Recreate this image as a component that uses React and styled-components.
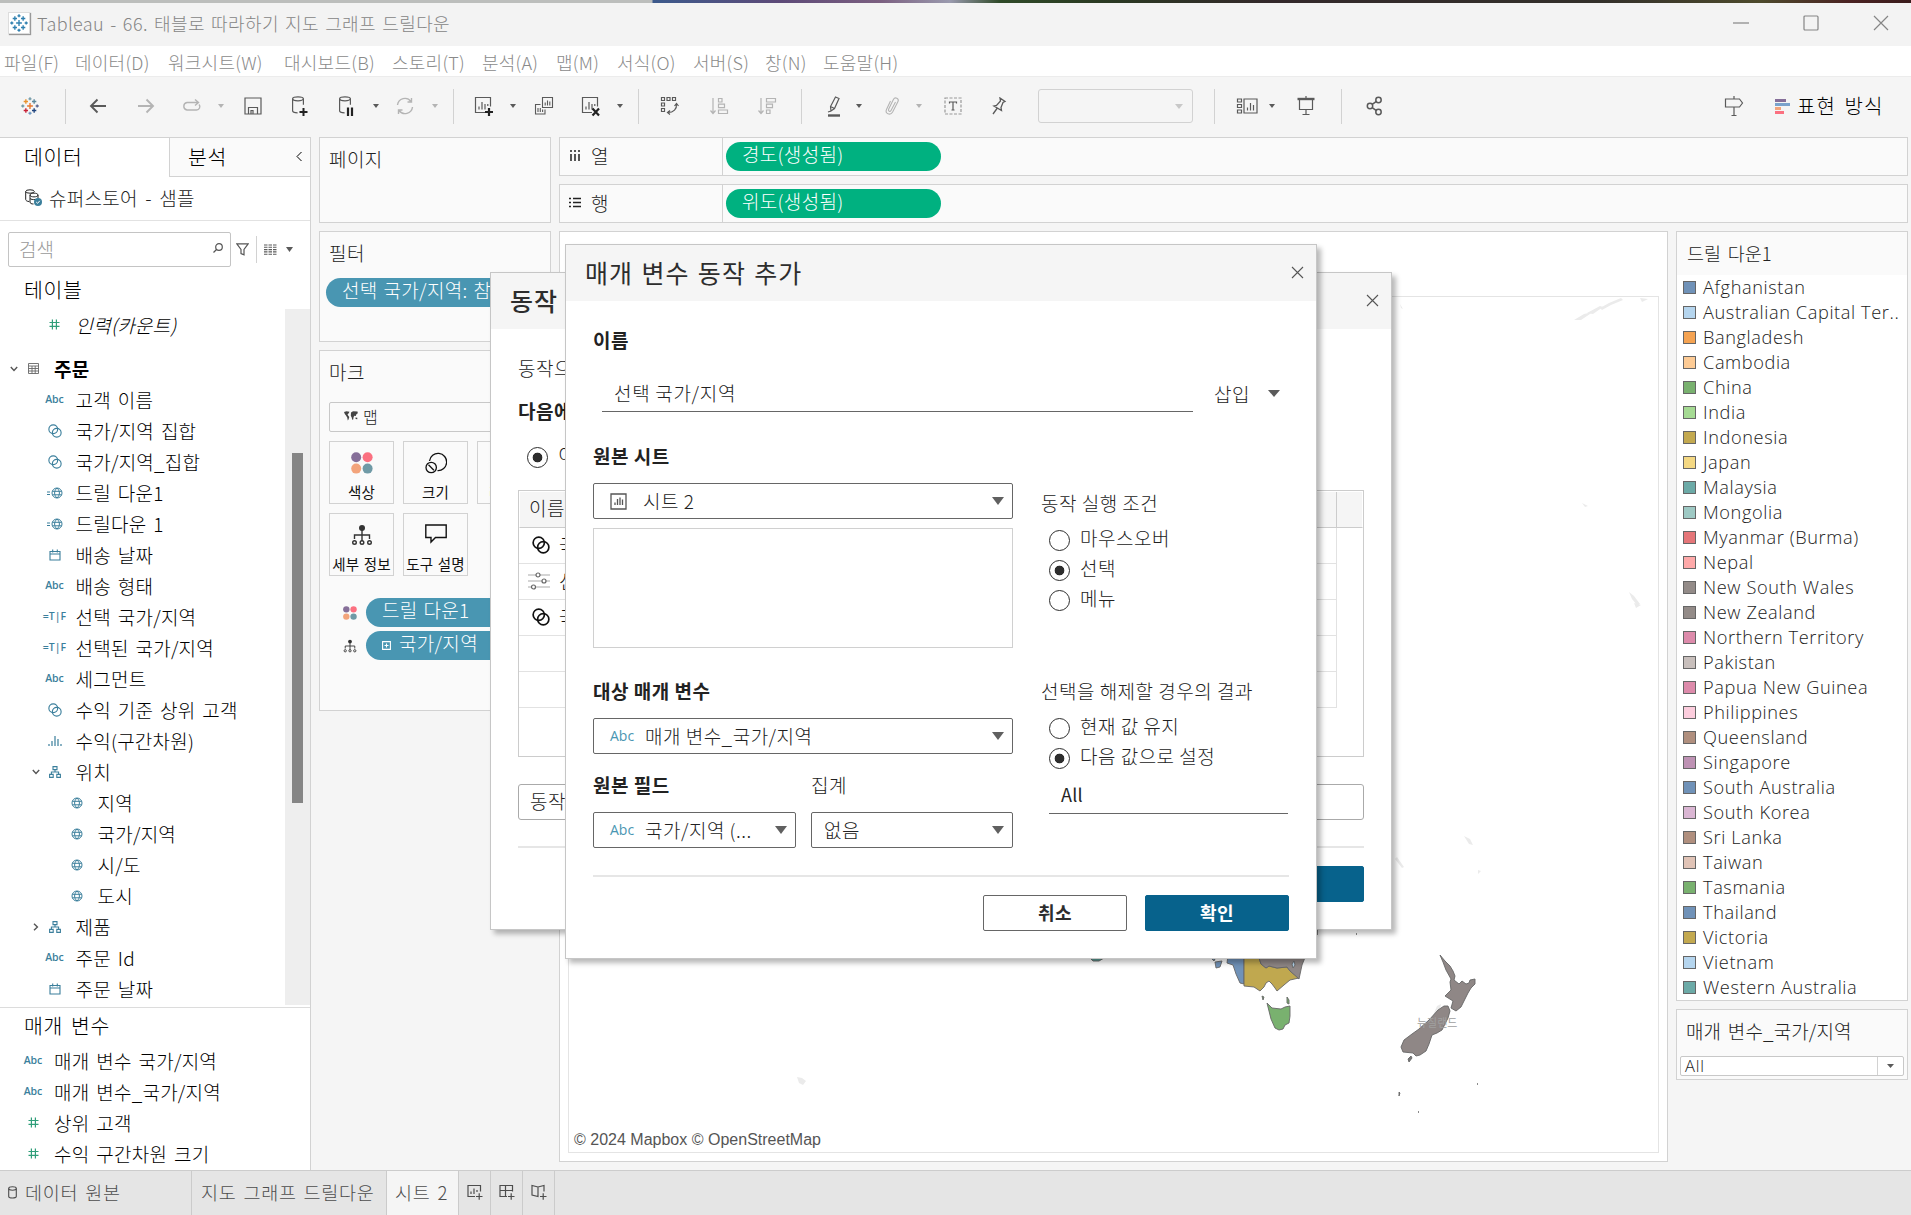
import React from "react";
import styled, { createGlobalStyle } from "styled-components";

const Global = createGlobalStyle`
  *, *::before, *::after { box-sizing: border-box; }
  html, body { margin: 0; padding: 0; overflow: hidden; }
  body {
    font-family: "Noto Sans CJK KR", "Noto Sans", sans-serif;
    font-size: 19px;
    font-weight: 300;
    color: #111;
  }
  svg { display: block; flex: none; }
`;

const BLUE = "#3b7f9c";
const GREEN = "#2f9e79";
const LINE = "#d2d2d2";

/* ---------- shell ---------- */
const Window = styled.div`
  position: relative;
  width: 1911px;
  height: 1215px;
  display: flex;
  flex-direction: column;
  background: #f5f5f5;
  overflow: hidden;
  white-space: nowrap;
`;
const Desktop = styled.div`
  height: 3px;
  flex: none;
  background: linear-gradient(90deg, #bcbebc 0 652px, #3c5a8c 653px, #5d4a78 780px, #7b5f80 880px, #9a9aae 950px, #2f4a28 1000px, #2a3a22 1100px, #33282a 1270px, #33302a 1600px, #4d4a2c 1760px, #4a2222 1850px, #3a1c1c);
`;
const TitleBar = styled.header`
  height: 43px;
  flex: none;
  display: flex;
  align-items: center;
  padding: 0 22px 3px 8px;
  background: #f3f3f3;
  color: #858585;
  font-size: 18px;
`;
const AppBadge = styled.span`
  width: 22px;
  height: 22px;
  display: grid;
  place-items: center;
  background: #fff;
  box-shadow: 1px 1px 1px #999;
  border: 1px solid #ddd;
  margin-right: 7px;
`;
const Title = styled.span`
  flex: 1;
  letter-spacing: 0.4px;
  word-spacing: 1.8px;
`;
const WindowButtons = styled.div`
  display: flex;
  gap: 54px;
`;
const MenuBar = styled.nav`
  height: 30px;
  flex: none;
  display: flex;
  align-items: center;
  gap: 17px;
  padding: 2px 0 0 4px;
  background: #fff;
  color: #8a8a8a;
  font-size: 18px;
  letter-spacing: 0.25px;
`;
const MenuItem = styled.span`
  width: ${(p) => p.$w}px;
  line-height: 28px;
`;
const Toolbar = styled.div`
  height: 61px;
  flex: none;
  display: flex;
  align-items: center;
  border-top: 1px solid #ececec;
  padding: 0 28px 2px 0;
`;
const Tool = styled.span`
  width: ${(p) => p.$w || 22}px;
  margin-left: ${(p) => p.$gap}px;
  display: flex;
  justify-content: center;
  flex: none;
  color: ${(p) => (p.$dim ? "#b4b4b4" : "#5a5a5a")};
`;
const Divider = styled.span`
  width: 1px;
  height: ${(p) => p.$h || 35}px;
  margin-left: ${(p) => p.$gap || 0}px;
  background: ${LINE};
  flex: none;
`;
const ToolSelect = styled.span`
  width: 155px;
  height: 34px;
  margin-left: 28px;
  border: 1px solid ${LINE};
  border-radius: 3px;
  display: flex;
  align-items: center;
  justify-content: flex-end;
  padding-right: 9px;
  color: #c8c8c8;
`;
const ShowMe = styled.span`
  display: flex;
  align-items: center;
  gap: 7px;
  margin-left: 30px;
  font-size: 20px;
  color: #000;
  line-height: 30px;
  span { width: 86px; letter-spacing: 1.1px; word-spacing: 3px; }
`;
const Spacer = styled.span`
  flex: 1;
`;
const Main = styled.main`
  height: 1033px;
  flex: none;
  display: flex;
`;

/* ---------- data pane ---------- */
const DataPane = styled.aside`
  width: 311px;
  flex: none;
  display: flex;
  flex-direction: column;
  background: #fff;
  border-top: 1px solid ${LINE};
  border-right: 1px solid ${LINE};
`;
const Tabs = styled.div`
  display: flex;
  height: 39px;
  flex: none;
  font-size: 20.5px;
  color: #000;
  line-height: 34px;
`;
const Tab = styled.div`
  flex: ${(p) => (p.$active ? "0 0 169px" : 1)};
  padding-left: ${(p) => (p.$active ? 24 : 18)}px;
  padding-right: 7px;
  padding-bottom: ${(p) => (p.$active ? 4 : 2)}px;
  letter-spacing: 0.6px;
  display: flex;
  align-items: center;
  justify-content: space-between;
  background: ${(p) => (p.$active ? "#fff" : "#fafafa")};
  border-left: ${(p) => (p.$active ? 0 : 1)}px solid ${LINE};
  border-bottom: ${(p) => (p.$active ? 0 : 1)}px solid ${LINE};
`;
const Source = styled.div`
  height: 44px;
  flex: none;
  display: flex;
  align-items: center;
  gap: 7px;
  padding: 0 0 2px 25px;
  border-bottom: 1px solid #e2e2e2;
  letter-spacing: 0.3px;
  word-spacing: 2.8px;
  color: #222;
`;
const SearchRow = styled.div`
  display: flex;
  align-items: center;
  height: 35px;
  flex: none;
  margin: 11px 0 0 8px;
  color: #555;
`;
const SearchBox = styled.div`
  width: 223px;
  height: 35px;
  display: flex;
  align-items: center;
  justify-content: space-between;
  padding: 0 7px 3px 10px;
  border: 1px solid #c4c4c4;
  border-radius: 2px;
  color: #9a9a9a;
  margin-right: 5px;
`;
const PaneHeading = styled.div`
  height: ${(p) => p.$h}px;
  line-height: ${(p) => p.$lh}px;
  flex: none;
  padding-left: 24px;
  font-size: 20.5px;
  letter-spacing: 0.6px;
  word-spacing: 3px;
  color: #000;
`;
const FieldArea = styled.div`
  height: 698px;
  flex: none;
  display: flex;
`;
const Fields = styled.div`
  flex: 1;
`;
const ScrollTrack = styled.div`
  width: 25px;
  height: 696px;
  background: #eee;
  padding: 144px 7px 0;
`;
const ScrollThumb = styled.div`
  height: 350px;
  background: #858585;
`;
const FieldRow = styled.div`
  height: 31px;
  margin-bottom: ${(p) => p.$after || 0}px;
  display: grid;
  grid-template-columns: 12px 26px auto;
  align-items: center;
  padding-left: ${(p) => [8, 29.5, 51.5][p.$depth]}px;
  line-height: 31px;
  letter-spacing: 0.23px;
  word-spacing: 2.4px;
  color: #000;
  font-weight: ${(p) => (p.$bold ? 700 : 300)};
  font-style: ${(p) => (p.$italic ? "italic" : "normal")};
`;
const Slot = styled.span`
  display: flex;
  justify-content: center;
  align-items: center;
  color: ${(p) => p.$c || BLUE};
  font: 600 10.5px/1 "Open Sans", sans-serif;
  letter-spacing: 0;
`;
const FieldName = styled.span`
  padding-left: 8px;
`;
const ParamBlock = styled.div`
  flex: 1;
  border-top: 1px solid #dcdcdc;
`;

/* ---------- cards ---------- */
const Cards = styled.section`
  width: 232px;
  flex: none;
  margin-left: 8px;
  display: flex;
  flex-direction: column;
  gap: 8px;
`;
const Card = styled.div`
  height: ${(p) => p.$h}px;
  flex: none;
  border: 1px solid ${LINE};
  background: #fafafa;
  overflow: hidden;
`;
const CardTitle = styled.div`
  height: 44px;
  line-height: 42px;
  padding-left: 9px;
  color: #222;
  letter-spacing: ${(p) => (p.$tight ? 0.1 : 0.4)}px;
  word-spacing: 2.4px;
`;
const Pill = styled.div`
  width: ${(p) => p.$w}px;
  height: 29px;
  border-radius: 15px;
  display: flex;
  align-items: center;
  gap: 8px;
  padding: 0 0 5px 16px;
  background: ${(p) => p.$bg || "#4996b2"};
  color: #fff;
  letter-spacing: 0.3px;
  word-spacing: 1.5px;
  line-height: 24px;
  svg { margin-top: 4px; }
`;
const FilterPillWrap = styled.div`
  padding: 2px 0 0 6px;
`;
const MarkType = styled.div`
  width: 213px;
  height: 30px;
  margin: 7px 0 9px 9px;
  padding: 0 0 2px 14px;
  border: 1px solid #c8c8c8;
  border-radius: 2px;
  display: flex;
  align-items: center;
  gap: 5px;
  font-size: 16px;
  color: #222;
`;
const MarkGrid = styled.div`
  display: grid;
  grid-template-columns: repeat(3, 65px);
  grid-auto-rows: 63px;
  gap: 9px;
  padding-left: 9px;
`;
const MarkButton = styled.div`
  border: 1px solid ${LINE};
  display: flex;
  flex-direction: column;
  align-items: center;
  justify-content: space-between;
  padding: 10px 0 1px;
  font-size: 14.5px;
  font-weight: 400;
  letter-spacing: 0.2px;
  word-spacing: 1px;
  line-height: 20px;
  color: #111;
`;
const MarkPills = styled.div`
  display: grid;
  gap: 4px;
  padding: 22px 0 0 22px;
`;
const MarkPillRow = styled.div`
  display: flex;
  align-items: center;
  gap: 8px;
`;
const MarkIcon = styled.span`
  width: 16px;
  display: flex;
  justify-content: center;
`;

/* ---------- workspace ---------- */
const Workspace = styled.section`
  width: 1349px;
  margin-left: 8px;
  display: flex;
  flex-direction: column;
`;
const Shelf = styled.div`
  height: 39px;
  flex: none;
  margin-bottom: 8px;
  border: 1px solid ${LINE};
  background: #fafafa;
  display: flex;
  align-items: center;
`;
const ShelfName = styled.div`
  width: 163px;
  height: 100%;
  display: flex;
  align-items: center;
  gap: 10px;
  padding: 0 0 2px 9px;
  border-right: 1px solid ${LINE};
  margin-right: 3px;
  color: #222;
`;
const Lower = styled.div`
  flex: none;
  height: 931px;
  display: flex;
  gap: 8px;
`;
const Sheet = styled.div`
  width: 1109px;
  background: #fff;
  border: 1px solid ${LINE};
  padding: 64px 8px 8px;
`;
const MapFrame = styled.div`
  height: 857px;
  border: 1px solid #e4e4e4;
`;
const RightColumn = styled.div`
  width: 232px;
  display: flex;
  flex-direction: column;
  gap: 8px;
`;
const Legend = styled.div`
  height: 770px;
  border: 1px solid ${LINE};
  background: #fff;
`;
const LegendTitle = styled.div`
  height: 43px;
  line-height: 42px;
  padding-left: 10px;
  background: #fafafa;
  color: #222;
  font-size: 18.5px;
  word-spacing: 2.5px;
`;
const LegendItem = styled.div`
  height: 25px;
  display: flex;
  align-items: center;
  gap: 7px;
  padding-left: 6px;
  font-family: "Open Sans", "Noto Sans", sans-serif;
  font-size: 18.2px;
  letter-spacing: 0.6px;
  line-height: 25px;
  color: #222;
`;
const Swatch = styled.i`
  width: 13px;
  height: 13px;
  flex: none;
  border: 1px solid #666;
  background: ${(p) => p.$c};
`;
const ParamCard = styled.div`
  height: 71px;
  border: 1px solid ${LINE};
  background: #fafafa;
  display: flex;
  flex-direction: column;
`;
const ParamSelect = styled.div`
  width: 224px;
  height: 20px;
  margin: 2px 0 0 3px;
  border: 1px solid #c8c8c8;
  border-radius: 2px;
  background: #fff;
  display: flex;
  align-items: center;
  justify-content: space-between;
  padding: 0 9px 0 4px;
  font: 300 16.5px/18px "Open Sans", sans-serif;
  letter-spacing: 0.8px;
  color: #222;
`;

/* ---------- sheet tabs ---------- */
const SheetTabs = styled.footer`
  height: 45px;
  flex: none;
  display: flex;
  background: #e5e5e5;
  border-top: 1px solid #ccc;
  color: #4d4d4d;
  font-size: 18.5px;
  letter-spacing: 0.75px;
  word-spacing: 2px;
`;
const SheetTab = styled.div`
  width: ${(p) => p.$w}px;
  display: flex;
  align-items: center;
  gap: 8px;
  padding-left: ${(p) => p.$pl}px;
  padding-bottom: 2px;
  border-right: 1px solid #cbcbcb;
  background: ${(p) => (p.$active ? "#f5f5f5" : "transparent")};
`;

/* ---------- dialogs ---------- */
const Dialog = styled.div`
  position: absolute;
  left: ${(p) => p.$x}px;
  top: ${(p) => p.$y}px;
  width: ${(p) => p.$w}px;
  height: ${(p) => p.$h}px;
  background: #fff;
  border: 1px solid #c6c6c6;
  box-shadow: 4px 4px 5px rgba(0, 0, 0, 0.28);
  display: flex;
  flex-direction: column;
  color: #222;
  letter-spacing: 0.5px;
  line-height: 24px;
`;
const DialogHeader = styled.div`
  height: 56px;
  flex: none;
  display: flex;
  align-items: center;
  justify-content: space-between;
  padding: 0 12px 0 19px;
  background: #f5f5f5;
  font-size: 25px;
  font-weight: ${(p) => p.$weight};
  letter-spacing: 1.1px;
  word-spacing: 1.5px;
  line-height: 52px;
  color: #2d2d2d;
  svg { color: #555; margin-top: -2px; }
  span { margin-top: -3px; }
`;
const Label = styled.div`
  font-weight: ${(p) => (p.$bold ? 700 : 300)};
  height: 24px;
  margin-top: ${(p) => p.$mt || 0}px;
  margin-left: ${(p) => p.$ml || 0}px;
`;
const NameRow = styled.div`
  display: flex;
  align-items: center;
  height: 37px;
  margin: 23px 0 0 36px;
`;
const NameInput = styled.div`
  width: 591px;
  height: 37px;
  line-height: 36px;
  padding-left: 12px;
  letter-spacing: 0.7px;
  border-bottom: 1px solid #666;
  margin-right: 21px;
`;
const Columns = styled.div`
  display: flex;
  padding-left: 27px;
`;
const LeftCol = styled.div`
  width: 420px;
  margin-right: 28px;
`;
const RightCol = styled.div`
  width: 250px;
`;
const Select = styled.div`
  width: ${(p) => p.$w}px;
  height: 36px;
  margin-top: ${(p) => p.$mt || 0}px;
  display: flex;
  align-items: center;
  padding: 0 8px 0 ${(p) => p.$pl || 16}px;
  border: 1px solid #666;
  border-radius: 2px;
  background: #fff;
  line-height: 34px;
`;
const Arrow = styled.span`
  margin-left: auto;
  color: #606060;
`;
const TypeTag = styled.span`
  width: 35px;
  font: 400 14px/20px "Open Sans", sans-serif;
  letter-spacing: 0;
  color: #4996b2;
`;
const SheetIcon = styled.span`
  width: 33px;
  color: #555;
`;
const ListBox = styled.div`
  height: 120px;
  margin-top: 9px;
  border: 1px solid #d0d0d0;
`;
const SelectPair = styled.div`
  display: grid;
  grid-template-columns: 203px 202px;
  column-gap: 15px;
`;
const RadioRow = styled.div`
  height: 30px;
  display: flex;
  align-items: center;
  gap: 10px;
  span { margin-top: -4px; }
`;
const RadioLine = styled(RadioRow)`
  height: 24px;
  padding-left: 9px;
  margin-top: 22px;
`;
const Radio = styled.i`
  width: 21px;
  height: 21px;
  flex: none;
  border: 1px solid #2d2d2d;
  border-radius: 50%;
  background: ${(p) => (p.$on ? "radial-gradient(circle, #2d2d2d 0 4.5px, #fff 5.2px)" : "#fff")};
`;
const RadioList = styled.div`
  margin: ${(p) => p.$mt}px 0 0 8px;
`;
const ValueInput = styled.div`
  width: 239px;
  height: 34px;
  margin: 7px 0 0 8px;
  padding-left: 12px;
  line-height: 29px;
  font-weight: 400;
  font-size: 18px;
  letter-spacing: 0.2px;
  border-bottom: 1px solid #666;
`;
const Rule = styled.div`
  height: 2px;
  margin: ${(p) => p.$m};
  background: #e6e6e6;
`;
const Buttons = styled.div`
  display: flex;
  justify-content: flex-end;
  gap: 18px;
  padding-right: ${(p) => p.$pr}px;
  margin-top: 18px;
`;
const Button = styled.div`
  width: 144px;
  height: 36px;
  line-height: 32px;
  text-align: center;
  border-radius: 2px;
  font-weight: 700;
  font-size: 18px;
  border: 1px solid ${(p) => (p.$primary ? "#07628c" : "#666")};
  background: ${(p) => (p.$primary ? "#07628c" : "#fff")};
  color: ${(p) => (p.$primary ? "#fff" : "#2d2d2d")};
`;
const ActionsBody = styled.div`
  padding: 0 27px 0 27px;
`;
const ActionTable = styled.div`
  height: 267px;
  margin-top: 21px;
  border: 1px solid #ccc;
`;
const ActionHead = styled.div`
  height: 37px;
  display: flex;
  background: #f5f5f5;
  border: 1px solid #fff;
  border-bottom: 1px solid #ccc;
  line-height: 32px;
  padding-left: 9px;
  &::after { content: ""; width: 26px; border-left: 1px solid #ccc; margin-left: auto; }
`;
const ActionRow = styled.div`
  width: 818px;
  height: 36px;
  display: flex;
  align-items: center;
  padding-bottom: 2px;
  border-bottom: 1px solid #e2e2e2;
  border-right: 1px solid #e2e2e2;
  color: #111;
`;
const ActionIcon = styled.span`
  width: 40px;
  padding-left: ${(p) => p.$pl}px;
`;
const AddAction = styled.div`
  height: 36px;
  margin-top: 27px;
  border: 1px solid #aaa;
  border-radius: 3px;
  line-height: 32px;
  padding-left: 11px;
`;

/* ---------- icons ---------- */
const Svg = ({ w = 20, h, vb, sw = 1.2, children, fill = "none" }) => (
  <svg width={w} height={h || w} viewBox={vb || `0 0 ${w} ${h || w}`} fill={fill} stroke="currentColor" strokeWidth={sw}>
    {children}
  </svg>
);
const Caret = ({ w = 6, h = 4 }) => (
  <svg width={w} height={h} viewBox="0 0 10 10" preserveAspectRatio="none" fill="currentColor"><path d="M0 0h10L5 10z" /></svg>
);
const plus = (x, y, r) => `M${x - r} ${y}h${2 * r}M${x} ${y - r}v${2 * r}`;
const Logo = ({ size = 18, mono }) => {
  const c = mono ? Array(9).fill("#2f80b0") : ["#e8762c", "#e8912c", "#5b879b", "#c72035", "#1f447e", "#7199a6", "#5c6692", "#7199a6", "#7199c0"];
  const p = [[10, 10, 3.2], [5.4, 5, 2.4], [14.6, 5, 2.4], [5.4, 15, 2.4], [14.6, 15, 2.4], [10, 2, 1.7], [18, 10, 1.7], [2, 10, 1.7], [10, 18, 1.7]];
  return <svg width={size} height={size} viewBox="0 0 20 20" fill="none" strokeWidth="1.5">{p.map((q, i) => <path key={i} d={plus(...q)} stroke={c[i]} />)}</svg>;
};
const Close = () => <Svg w={13} vb="0 0 13 13" sw={1.1}><path d="M1 1l11 11M12 1L1 12" /></Svg>;
const Rings = ({ s = 14, sw = 1.3 }) => <Svg w={s} vb="0 0 16 16" sw={sw}><circle cx="6" cy="6" r="5" /><circle cx="10" cy="10" r="5" /></Svg>;
const GlobeBody = () => <g><circle cx="6" cy="6" r="5" /><path d="M6 1c-3.2 3-3.2 7 0 10M6 1c3.2 3 3.2 7 0 10M1.4 4.3h9.2M1.4 7.8h9.2" /></g>;
const Globe = () => <Svg w={12} sw={1}><GlobeBody /></Svg>;
const CalcGlobe = () => <Svg w={16} h={12} sw={1}><path d="M0 5h3M0 7.5h3" /><g transform="translate(4 0)"><GlobeBody /></g></Svg>;
const Calendar = () => <Svg w={12} sw={1.1}><path d="M1 2.5h10v8.5H1zM1 5h10M3.700.5v3M8.300.5v3" /></Svg>;
const Tree = () => <Svg w={12} sw={1.1}><path d="M4 .6h4v3H4zM.6 8.4h3.600v3H.6zM7.800 8.400h3.600v3H7.800zM6 3.600V6M2.400 8.400V6h7.200v2.400" /></Svg>;
const Hash = () => <Svg w={11} sw={1.2}><path d="M3.400.5v10M7.400.5v10M.5 3.500h10M.5 7.400h10" /></Svg>;
const Bins = () => <Svg w={14} h={10} sw={1.2}><path d="M1 8v2M4 5v5M7 0v10M10 3v7M13 8v2" /></Svg>;
const Table = () => <Svg w={11} sw={0.9}><path d="M.5.5h10v10H.5zM.5 3h10M.5 5.500h10M.5 8h10M4 3v7.500M7.200 3v7.500" /></Svg>;
const ChevDown = () => <Svg w={8} h={6} sw={1.4}><path d="M.8 1L4 4.400 7.200 1" /></Svg>;
const ChevRight = () => <Svg w={6} h={8} sw={1.4}><path d="M1 .8L4.400 4 1 7.200" /></Svg>;
const Dots = ({ s = 22 }) => (
  <svg width={s} height={s} viewBox="0 0 22 22"><circle cx="5.2" cy="5.2" r="5" fill="#866f99" /><circle cx="16.6" cy="5.2" r="5" fill="#fb7080" /><circle cx="5.2" cy="16.6" r="5" fill="#f3a47b" /><circle cx="16.6" cy="16.6" r="5" fill="#6f9aa6" /></svg>
);
const Detail = ({ s = 22 }) => (
  <svg width={s} height={s} viewBox="0 0 22 22" fill="none" stroke="#333" strokeWidth="1.4"><circle cx="11" cy="4" r="3" fill="#333" stroke="none" /><path d="M11 6v11M3.500 15v-4h15v4" /><circle cx="3.5" cy="18.5" r="1.8" /><circle cx="11" cy="18.5" r="1.8" /><circle cx="18.5" cy="18.5" r="1.8" /></svg>
);
const SizeIcon = () => <Svg w={22} sw={1.3}><path d="M4.500 9a8.600 8.600 0 1 1 8 9.600" /><circle cx="6.2" cy="15.5" r="5.2" /><path d="M3.500 12.800l5.400 5.400" /></Svg>;
const Tip = () => <Svg w={22} h={20} sw={1.4}><path d="M.8 1h20.400v12.500H10.500L6 18v-4.500H.8z" /></Svg>;
const WorldMap = () => (
  <svg width="14" height="10" viewBox="0 0 14 10" fill="#444"><path d="M0 1l2.500-.8 3 .6-1 1.800-1 .8.800 1.300 1 1.200-.8 2.600-.7 1-.6-3-1.200-2L.8 3zM7 1.500l2-1.200 4.500.2.300 1.800-1.400 1-.6 1.800-1.400-.4-.8 1.400-.4 2.400-1 .3-.5-2.400-.9-1.600zM11.500 6.500l1.800.3v1.500l-1.700-.2z" /></svg>
);
const DbBody = () => <g><ellipse cx="8" cy="3.8" rx="5.4" ry="2" /><path d="M2.600 3.800v12c0 1.200 2 2 5 2M13.400 3.800v6" /></g>;
const ChartBody = () => <g transform="translate(2 2)"><path d="M10 15.500H.5V.5h15v9M4 12.500v-3M7 12.500V5M10 12.500V7M12.800 9v-2" /></g>;

const icons = {
  back: <Svg w={20} sw={1.9}><path d="M18 10H3M9.500 3.500L3 10l6.500 6.500" /></Svg>,
  fwd: <Svg w={20} sw={1.9}><path d="M2 10h15M10.500 3.500L17 10l-6.500 6.500" /></Svg>,
  redo: <Svg w={20} h={16} sw={1.4}><path d="M13 1.500l3.500 3-3.500 3M16.500 4.500H5A3.800 3.800 0 0 0 5 12h9.500a3.300 3.300 0 0 0 2.500-5.500" /></Svg>,
  save: <Svg w={18} h={18}><path d="M1 1h16v16H1zM4.500 17v-6.500h9V17M7 17v-3.500h2V17" /></Svg>,
  dbAdd: <Svg w={20} h={22}><DbBody /><path d="M9.500 17h8M13.500 13v8" strokeWidth="2" stroke="#222" /></Svg>,
  dbPause: <Svg w={20} h={22}><DbBody /><path d="M11 12.500v8.500M15 12.500v8.500" strokeWidth="2.2" stroke="#222" /></Svg>,
  refresh: <Svg w={20} sw={1.4}><path d="M2.500 9A7.500 7.500 0 0 1 16 5.500M17.500 11A7.500 7.500 0 0 1 4 14.500M16.500 2v4h-4M3.500 18v-4h4" /></Svg>,
  chartAdd: <Svg w={22} h={22}><ChartBody /><path d="M12 17h8M16 13v8" strokeWidth="2.2" stroke="#222" /></Svg>,
  dup: <Svg w={20} h={20} sw={1.1}><path d="M8.500 1.500h10v10h-10zM11.200 9.500v-3M13.500 9.500v-5M15.800 9.500v-4M6.500 8.500h-5v9.500h9.500v-4.500M4 16v-4M6.300 16v-4M8.600 16v-2.500" /></Svg>,
  chartX: <Svg w={22} h={22}><ChartBody /><path d="M12.500 13.500l6.500 7M19 13.500l-6.500 7" strokeWidth="2.2" stroke="#222" /></Svg>,
  swap: <Svg w={20} h={20}><path d="M1.500 1.500h3v3h-3zM7 1.500h3v3H7zM12.500 1.500h3v3h-3zM1.500 7h3v3h-3zM1.500 12.500h3v3h-3zM16.500 8c.500 5-3 8.500-8.500 8.500M14.500 10l2-2.500 2 2.500M10 14.500L7.500 16.500l2.500 2" /></Svg>,
  sortA: <Svg w={20} h={18}><path d="M4 1v15M1.500 13.500L4 16.500l2.500-3M9.500 1.500H13v3.500H9.500zM9.500 7.200h6v3.500h-6zM9.500 13h9v3.500h-9z" /></Svg>,
  sortD: <Svg w={20} h={18}><path d="M4 1v15M1.500 13.500L4 16.500l2.500-3M9.500 1.500h9V5h-9zM9.500 7.200h6v3.500h-6zM9.500 13H13v3.500H9.500z" /></Svg>,
  pen: <Svg w={18} h={22}><path d="M10.500 2l3.500 1.500-4.500 10-3.500 2.500-.5-4.500zM5.500 11.500l4 2M3 17l3-1" /><path d="M3 20.500h12" strokeWidth="2.4" /></Svg>,
  clip: <Svg w={16} h={20} sw={1.1}><path d="M11.500 6L7 14.500c-1 1.800-3.200.6-2.400-1.200L9.400 3.400c1.600-3 6-1 4.600 2.200L8.600 16c-2.400 4.200-8 1.400-6-2.800L6.500 5" /></Svg>,
  text: <Svg w={18} h={18}><path d="M1 1h16v16H1z" strokeDasharray="3 1.5" stroke="#999" /><path d="M5.500 6.500V5h7v1.500M9 5v8M7.500 13h3" /></Svg>,
  pin: <Svg w={16} h={18} sw={1.3}><path d="M9 1l5 3.500-2 1-2 5 .5 3-7.500-4.500 2.500-.5 4-4.500zM6 11.500L2 17" /></Svg>,
  cards: <Svg w={22} h={18}><path d="M1.500 2h4v3h-4zM1.500 7.500h4v3h-4zM1.500 13h4v3h-4zM8 2h13v14H8zM11.500 13.500v-3M14.500 13.500V6M17.500 13.500V8" /></Svg>,
  present: <Svg w={18} h={20}><path d="M2.500 3v10.500h13V3M9 0v3M9 13.500v5M5.500 18.500h7" /><path d="M.5 3h17" strokeWidth="2.4" /></Svg>,
  share: <Svg w={18} h={20} sw={1.5}><circle cx="5" cy="10" r="2.7" /><circle cx="13.5" cy="4" r="2.7" /><circle cx="13.5" cy="16" r="2.7" /><path d="M7.200 8.400l4.200-3M7.200 11.600l4.200 3" /></Svg>,
  sign: <Svg w={20} h={22}><path d="M1.500 4h14l3 4-3 4h-14zM10 1v3M10 12v8.500M7.500 20.500h5" /></Svg>,
};

const tools = [
  ["back", 21], ["fwd", 26, 1], ["redo", 24, 1], ["caret", 14, 1], ["save", 17], ["dbAdd", 25], ["dbPause", 25], ["caret", 14],
  ["refresh", 14, 1], ["caret", 15, 1], ["sep", 14], ["chartAdd", 19], ["caret", 14], ["dup", 16], ["chartX", 25], ["caret", 14], ["sep", 14],
  ["swap", 20], ["sortA", 27, 1], ["sortD", 26, 1], ["sep", 23], ["pen", 21], ["caret", 10], ["clip", 18, 1], ["caret", 12, 1], ["text", 19], ["pin", 24],
  ["select"], ["sep", 21], ["cards", 21], ["caret", 10], ["present", 19], ["sep", 24], ["share", 21],
];

const menus = [["파일(F)", 54], ["데이터(D)", 76], ["워크시트(W)", 99], ["대시보드(B)", 91], ["스토리(T)", 73], ["분석(A)", 57], ["맵(M)", 44], ["서식(O)", 59], ["서버(S)", 55], ["창(N)", 41], ["도움말(H)", 78]];

const fields = [
  ["abc", "고객 이름"], ["set", "국가/지역 집합"], ["set", "국가/지역_집합"], ["cglobe", "드릴 다운1"], ["cglobe", "드릴다운 1"], ["date", "배송 날짜"],
  ["abc", "배송 형태"], ["tf", "선택 국가/지역"], ["tf", "선택된 국가/지역"], ["abc", "세그먼트"], ["set", "수익 기준 상위 고객"], ["bins", "수익(구간차원)"],
  ["tree", "위치", 1, "down"], ["globe", "지역", 2], ["globe", "국가/지역", 2], ["globe", "시/도", 2], ["globe", "도시", 2],
  ["tree", "제품", 1, "right"], ["abc", "주문 Id"], ["date", "주문 날짜"],
];
const params = [["abc", "매개 변수 국가/지역"], ["abc", "매개 변수_국가/지역"], ["hash", "상위 고객"], ["hash", "수익 구간차원 크기"]];
const fieldIcon = {
  abc: "Abc", tf: "=T|F", set: <Rings />, cglobe: <CalcGlobe />, globe: <Globe />, date: <Calendar />, tree: <Tree />, hash: <Hash />, bins: <Bins />, table: <Table />,
};

const Field = ({ type, name, depth = 1, open, ...rest }) => (
  <FieldRow $depth={depth} {...rest}>
    <Slot $c="#555">{open === "down" ? <ChevDown /> : open === "right" ? <ChevRight /> : null}</Slot>
    <Slot $c={type === "hash" ? GREEN : type === "table" ? "#666" : BLUE}>{fieldIcon[type]}</Slot>
    <FieldName>{name}</FieldName>
  </FieldRow>
);

const legend = [
  ["Afghanistan", "#7092b8"], ["Australian Capital Ter..", "#b5d5ee"], ["Bangladesh", "#f5a352"], ["Cambodia", "#fdcb95"], ["China", "#79b16f"], ["India", "#a5da93"],
  ["Indonesia", "#c3a950"], ["Japan", "#f4d883"], ["Malaysia", "#6caaa7"], ["Mongolia", "#9ec9c4"], ["Myanmar (Burma)", "#e57679"], ["Nepal", "#fea9a9"],
  ["New South Wales", "#938b88"], ["New Zealand", "#938b88"], ["Northern Territory", "#dd8bab"], ["Pakistan", "#c8bfbc"], ["Papua New Guinea", "#dd8bab"],
  ["Philippines", "#fccddd"], ["Queensland", "#b08f7e"], ["Singapore", "#be92b4"], ["South Australia", "#7092b8"], ["South Korea", "#dab6d3"], ["Sri Lanka", "#b08f7e"],
  ["Taiwan", "#e0c3b6"], ["Tasmania", "#79b16f"], ["Thailand", "#7092b8"], ["Victoria", "#c3a950"], ["Vietnam", "#b5d5ee"], ["Western Australia", "#6caaa7"],
];

const MapView = () => (
  <svg width="1089" height="855" viewBox="569 297 1089 855">
    <g fill="#ebebeb">
      <path d="M1574 320l10-6 9-2-12 8zM1587 313l13-7 3 1-10 7zM1600 308l9-5 12-5 2 2-12 5-9 5zM1640 298l8 1-6 3zM1629 592l5 4 6 8-3 1-5-6zM1634 603l7 2-5 3zM1582 503l6 3-3 1zM797 1077l5 1 4 3-3 4-4-2zM1400 304l3 5-2-1zM1397 857l7 10-2 1-7-9zM1464 836l6 3 3 6-4-1zM1478 870l3 1-3 3zM1437 1006l4-2-2 10-12 14-10 8 4-8 10-8zM1506 1030l1 3z" />
    </g>
    <g stroke="#666" strokeWidth="0.9" strokeLinejoin="round">
      <path fill="#7092b8" d="M1228 955h16v29l-4-1-4-9-3-9-6-2zM1215 962l7-1-2 6-4 1zM1211 958l4 1-1 2zM1218 956l4 1-2 2z" />
      <path fill="#c0a84f" d="M1244 955h14l3 9 5 4 3-2 8 2 10-1 3 4 9 7-9 2-6 5-7 6-2-3-3-4-3-3-3 2-2 4-4 4-6-4-10-1z" />
      <path fill="#8f8786" d="M1258 955h48l-4 10-3 14-9-8-3-4-10 1-8-2-3 2-5-4z" />
      <path fill="#b5d5ee" d="M1294 961l-2 3 1 4 2-3z" />
      <path fill="#79b16f" d="M1267 1003l5 5 9 1 4-2 5-1v10l-1 7-4 2-2 4-4 1-4-2-4-9z" />
      <path fill="#5c9e96" d="M1090 958h14l-5 3h-6z" />
      <path fill="#79b16f" d="M1262 996l2 1-1 3zM1287 997l2 3v4l-2-1z" />
      <path fill="#8f8786" d="M1440 955l5 6 5 5 3 5 2 5-1 4 5 4 3-3 4 3 3-1 1-3 5-1v5l-4 4-3 5-3 6-4 8-5 4-5-3 2-7-8-5 6-6-1-8 1-3-5-9-3-8z" />
      <path fill="#8f8786" d="M1448 1006l2 5-2 7-6 12-5 3-5 2-3 9-3 7-6 4-4 1-3-3-10-1-2-5 3-7 8-6 7-5 10-9 9-10 6-4z" />
      <path fill="#777" d="M1408 1059l3-3 1 2-3 4zM1399 1092l1 1-1 3z" />
    </g>
    <path d="M1317 930v5M1418 1112h1M1477 1084h1M1356 934h1" stroke="#666" strokeWidth="1.5" />
    <text x="1417" y="1027" fontSize="11" fontWeight="400" fill="#a0a0a0">뉴질랜드</text>
    <text x="574" y="1145" fontSize="16" textLength="247" fontWeight="400" fontFamily="Liberation Sans, sans-serif" fill="#555">© 2024 Mapbox © OpenStreetMap</text>
  </svg>
);

const ChartTab = () => <Svg w={16} h={16}><path d="M8 12.500H1v-11h12.500v6M4 10V7.500M7 10V4.500M10 8V6M9 12.500h6.500M12.200 9.300v6.500" /></Svg>;
const DashTab = () => <Svg w={16} h={16}><path d="M8 12.500H1v-11h12.500v6M1 6.500h12.500M6.500 1.500v11M9 12.500h6.500M12.200 9.300v6.500" /></Svg>;
const StoryTab = () => <Svg w={16} h={16}><path d="M7 3v9.500L1 11V1.500L7 3l6-1.500v6M9 12.500h6.500M12.200 9.300v6.500" /></Svg>;
const Sliders = () => (
  <Svg w={22} h={18}><path d="M0 3h22M0 9h22M0 15h22" stroke="#aaa" /><g fill="#fff" stroke="#666"><circle cx="10" cy="3" r="2" /><circle cx="16" cy="9" r="2" /><circle cx="5.5" cy="15" r="2" /></g></Svg>
);
const ArrowDown = () => <Arrow><Caret w={12} h={8} /></Arrow>;

function ActionsDialog() {
  return (
    <Dialog $x={490} $y={272} $w={902} $h={658}>
      <DialogHeader $weight={500}><span>동작</span><Close /></DialogHeader>
      <ActionsBody>
        <Label $mt={27}>동작으</Label>
        <Label $mt={19} $bold>다음에</Label>
        <RadioLine><Radio $on /><span>이</span></RadioLine>
        <ActionTable>
          <ActionHead>이름</ActionHead>
          <ActionRow><ActionIcon $pl={13}><Rings s={18} sw={1.5} /></ActionIcon>국</ActionRow>
          <ActionRow><ActionIcon $pl={9}><Sliders /></ActionIcon>선</ActionRow>
          <ActionRow><ActionIcon $pl={13}><Rings s={18} sw={1.5} /></ActionIcon>국</ActionRow>
          <ActionRow />
          <ActionRow />
        </ActionTable>
        <AddAction>동작</AddAction>
      </ActionsBody>
      <Rule $m="26px 27px 0 27px" />
      <Buttons $pr={27}><Button $primary /></Buttons>
    </Dialog>
  );
}

function ParameterDialog() {
  return (
    <Dialog $x={565} $y={244} $w={752} $h={715}>
      <DialogHeader $weight={400}><span>매개 변수 동작 추가</span><Close /></DialogHeader>
      <Label $bold $mt={27} $ml={27}>이름</Label>
      <NameRow>
        <NameInput>선택 국가/지역</NameInput>
        삽입
        <Tool $gap={17} $w={14}><Caret w={12} h={7} /></Tool>
      </NameRow>
      <Columns>
        <LeftCol>
          <Label $bold $mt={32}>원본 시트</Label>
          <Select $w={420} $mt={15}>
            <SheetIcon><Svg w={17} sw={1.3}><path d="M1 1h15v15H1zM5 12V9.500M7.500 12V6M10 12V4.500M12.500 12V6.500" /></Svg></SheetIcon>시트 2<ArrowDown />
          </Select>
          <ListBox />
          <Label $bold $mt={31}>대상 매개 변수</Label>
          <Select $w={420} $mt={15}><TypeTag>Abc</TypeTag>매개 변수_국가/지역<ArrowDown /></Select>
          <SelectPair>
            <Label $bold $mt={19}>원본 필드</Label>
            <Label $mt={19}>집계</Label>
            <Select $w={203} $mt={15}><TypeTag>Abc</TypeTag>국가/지역 (...<ArrowDown /></Select>
            <Select $w={202} $mt={15} $pl={12}>없음<ArrowDown /></Select>
          </SelectPair>
        </LeftCol>
        <RightCol>
          <Label $mt={79}>동작 실행 조건</Label>
          <RadioList $mt={10}>
            <RadioRow><Radio /><span>마우스오버</span></RadioRow>
            <RadioRow><Radio $on /><span>선택</span></RadioRow>
            <RadioRow><Radio /><span>메뉴</span></RadioRow>
          </RadioList>
          <Label $mt={64}>선택을 해제할 경우의 결과</Label>
          <RadioList $mt={10}>
            <RadioRow><Radio /><span>현재 값 유지</span></RadioRow>
            <RadioRow><Radio $on /><span>다음 값으로 설정</span></RadioRow>
          </RadioList>
          <ValueInput>All</ValueInput>
        </RightCol>
      </Columns>
      <Rule $m="27px 27px 0 27px" />
      <Buttons $pr={27}><Button>취소</Button><Button $primary>확인</Button></Buttons>
    </Dialog>
  );
}

export default function App() {
  return (
    <Window>
      <Global />
      <Desktop />
      <TitleBar>
        <AppBadge><Logo size={18} mono /></AppBadge>
        <Title>Tableau - 66. 태블로 따라하기 지도 그래프 드릴다운</Title>
        <WindowButtons>
          <Svg w={16}><path d="M0 8h16" /></Svg>
          <Svg w={16}><rect x="1" y="1" width="14" height="14" rx="1" /></Svg>
          <Svg w={16}><path d="M1 1l14 14M15 1L1 15" /></Svg>
        </WindowButtons>
      </TitleBar>
      <MenuBar>{menus.map(([m, w]) => <MenuItem key={m} $w={w}>{m}</MenuItem>)}</MenuBar>
      <Toolbar>
        <Tool $gap={19}><Logo /></Tool>
        <Divider $gap={24} />
        {tools.map(([name, gap, dim], i) =>
          name === "sep" ? <Divider key={i} $gap={gap} />
            : name === "select" ? <ToolSelect key={i}><Caret w={8} h={5} /></ToolSelect>
              : <Tool key={i} $gap={gap} $dim={dim} $w={name === "caret" ? 8 : 22}>{name === "caret" ? <Caret /> : icons[name]}</Tool>
        )}
        <Spacer />
        <Tool $gap={0}>{icons.sign}</Tool>
        <ShowMe>
          <svg width="15" height="15"><path fill="#866f99" d="M0 0h11v3H0z" /><path fill="#7ba3cc" d="M0 4h15v3H0z" /><path fill="#f3a47b" d="M0 8h6v3H0z" /><path fill="#fb7080" d="M0 12h9v3H0z" /></svg>
          <span>표현 방식</span>
        </ShowMe>
      </Toolbar>

      <Main>
        <DataPane>
          <Tabs>
            <Tab $active>데이터</Tab>
            <Tab>분석<Svg w={7} h={11} sw={1}><path d="M5.500 1L1 5.500 5.500 10" /></Svg></Tab>
          </Tabs>
          <Source>
            <Svg w={17} h={17} sw={1}><ellipse cx="5" cy="2.5" rx="4.3" ry="1.7" /><path d="M.7 2.500v8c0 1 1.500 2 3.500 2M5 6c0-2.500 8-2.500 8 0s-8 2.500-8 0v7c0 1.500 1.500 2 3.500 2M13 6v3M5 9.500c1 1 3 1.200 5 1" /><circle cx="13" cy="13" r="4" fill={BLUE} stroke="none" /><path d="M11.200 13l1.400 1.300 2.200-2.500" stroke="#fff" /></Svg>
            슈퍼스토어 - 샘플
          </Source>
          <SearchRow>
            <SearchBox>검색<Svg w={10} h={10}><circle cx="6" cy="4" r="3.3" stroke="#555" /><path d="M3.500 6.500L.5 9.500" stroke="#555" /></Svg></SearchBox>
            <Svg w={13} h={13}><path d="M.8.8h11.400L8 6.500v5.300L5 10.500v-4z" /></Svg>
            <Divider $gap={7} $h={27} />
            <Tool $gap={2}><Svg w={13} h={11} sw={1.1}><path d="M0 1h13M0 3.300h13M0 5.600h13M0 7.900h13M0 10.200h13" strokeDasharray="3.5 1" /></Svg></Tool>
            <Tool $gap={4} $w={8}><Caret w={7} h={5} /></Tool>
          </SearchRow>
          <PaneHeading $h={42} $lh={44}>테이블</PaneHeading>
          <FieldArea>
            <Fields>
              <Field type="hash" name="인력(카운트)" $italic $after={13} />
              <Field type="table" name="주문" depth={0} open="down" $bold />
              {fields.map(([t, n, d, o]) => <Field key={n} type={t} name={n} depth={d || 1} open={o} />)}
            </Fields>
            <ScrollTrack><ScrollThumb /></ScrollTrack>
          </FieldArea>
          <ParamBlock>
            <PaneHeading $h={37} $lh={35}>매개 변수</PaneHeading>
            {params.map(([t, n]) => <Field key={n} type={t} name={n} depth={0} />)}
          </ParamBlock>
        </DataPane>

        <Cards>
          <Card $h={86}><CardTitle>페이지</CardTitle></Card>
          <Card $h={111}>
            <CardTitle>필터</CardTitle>
            <FilterPillWrap><Pill $w={215}>선택 국가/지역: 참</Pill></FilterPillWrap>
          </Card>
          <Card $h={361}>
            <CardTitle>마크</CardTitle>
            <MarkType><WorldMap />맵</MarkType>
            <MarkGrid>
              <MarkButton><Dots />색상</MarkButton>
              <MarkButton><SizeIcon />크기</MarkButton>
              <MarkButton><Svg w={22} h={20}><path d="M1 1h20v16H1z" /></Svg>레이블</MarkButton>
              <MarkButton><Detail />세부 정보</MarkButton>
              <MarkButton><Tip />도구 설명</MarkButton>
            </MarkGrid>
            <MarkPills>
              <MarkPillRow><MarkIcon><Dots s={14} /></MarkIcon><Pill $w={176}>드릴 다운1</Pill></MarkPillRow>
              <MarkPillRow><MarkIcon><Detail s={14} /></MarkIcon><Pill $w={176}><Svg w={9} sw={1.1}><path d="M.6.6h7.800v7.800H.6zM2.500 4.500h4M4.500 2.500v4" /></Svg>국가/지역</Pill></MarkPillRow>
            </MarkPills>
          </Card>
        </Cards>

        <Workspace>
          <Shelf>
            <ShelfName><Svg w={12} h={11} sw={1.5}><path d="M2 0v2M6 0v2M10 0v2M2 4v7M6 4v7M10 4v7" /></Svg>열</ShelfName>
            <Pill $w={215} $bg="#00b180">경도(생성됨)</Pill>
          </Shelf>
          <Shelf>
            <ShelfName><Svg w={12} h={11} sw={1.3}><path d="M0 1.500h2M4 1.500h8M0 5.500h2M4 5.500h8M0 9.500h2M4 9.500h8" /></Svg>행</ShelfName>
            <Pill $w={215} $bg="#00b180">위도(생성됨)</Pill>
          </Shelf>
          <Lower>
            <Sheet><MapFrame><MapView /></MapFrame></Sheet>
            <RightColumn>
              <Legend>
                <LegendTitle>드릴 다운1</LegendTitle>
                {legend.map(([n, c]) => <LegendItem key={n}><Swatch $c={c} />{n}</LegendItem>)}
              </Legend>
              <ParamCard>
                <CardTitle $tight>매개 변수_국가/지역</CardTitle>
                <ParamSelect><span>All</span><Spacer /><Divider $h={18} /><Tool $gap={8} $w={8}><Caret w={7} h={4} /></Tool></ParamSelect>
              </ParamCard>
            </RightColumn>
          </Lower>
        </Workspace>
      </Main>

      <SheetTabs>
        <SheetTab $w={192} $pl={8}><Svg w={9} h={13} sw={1.1}><ellipse cx="4.5" cy="2.5" rx="3.8" ry="1.7" /><path d="M.7 2.500v8c0 2 7.600 2 7.600 0v-8" /></Svg>데이터 원본</SheetTab>
        <SheetTab $w={195} $pl={9}>지도 그래프 드릴다운</SheetTab>
        <SheetTab $w={72} $pl={8} $active>시트 2</SheetTab>
        <SheetTab $w={32} $pl={8}><ChartTab /></SheetTab>
        <SheetTab $w={32} $pl={8}><DashTab /></SheetTab>
        <SheetTab $w={32} $pl={8}><StoryTab /></SheetTab>
      </SheetTabs>

      <ActionsDialog />
      <ParameterDialog />
    </Window>
  );
}
